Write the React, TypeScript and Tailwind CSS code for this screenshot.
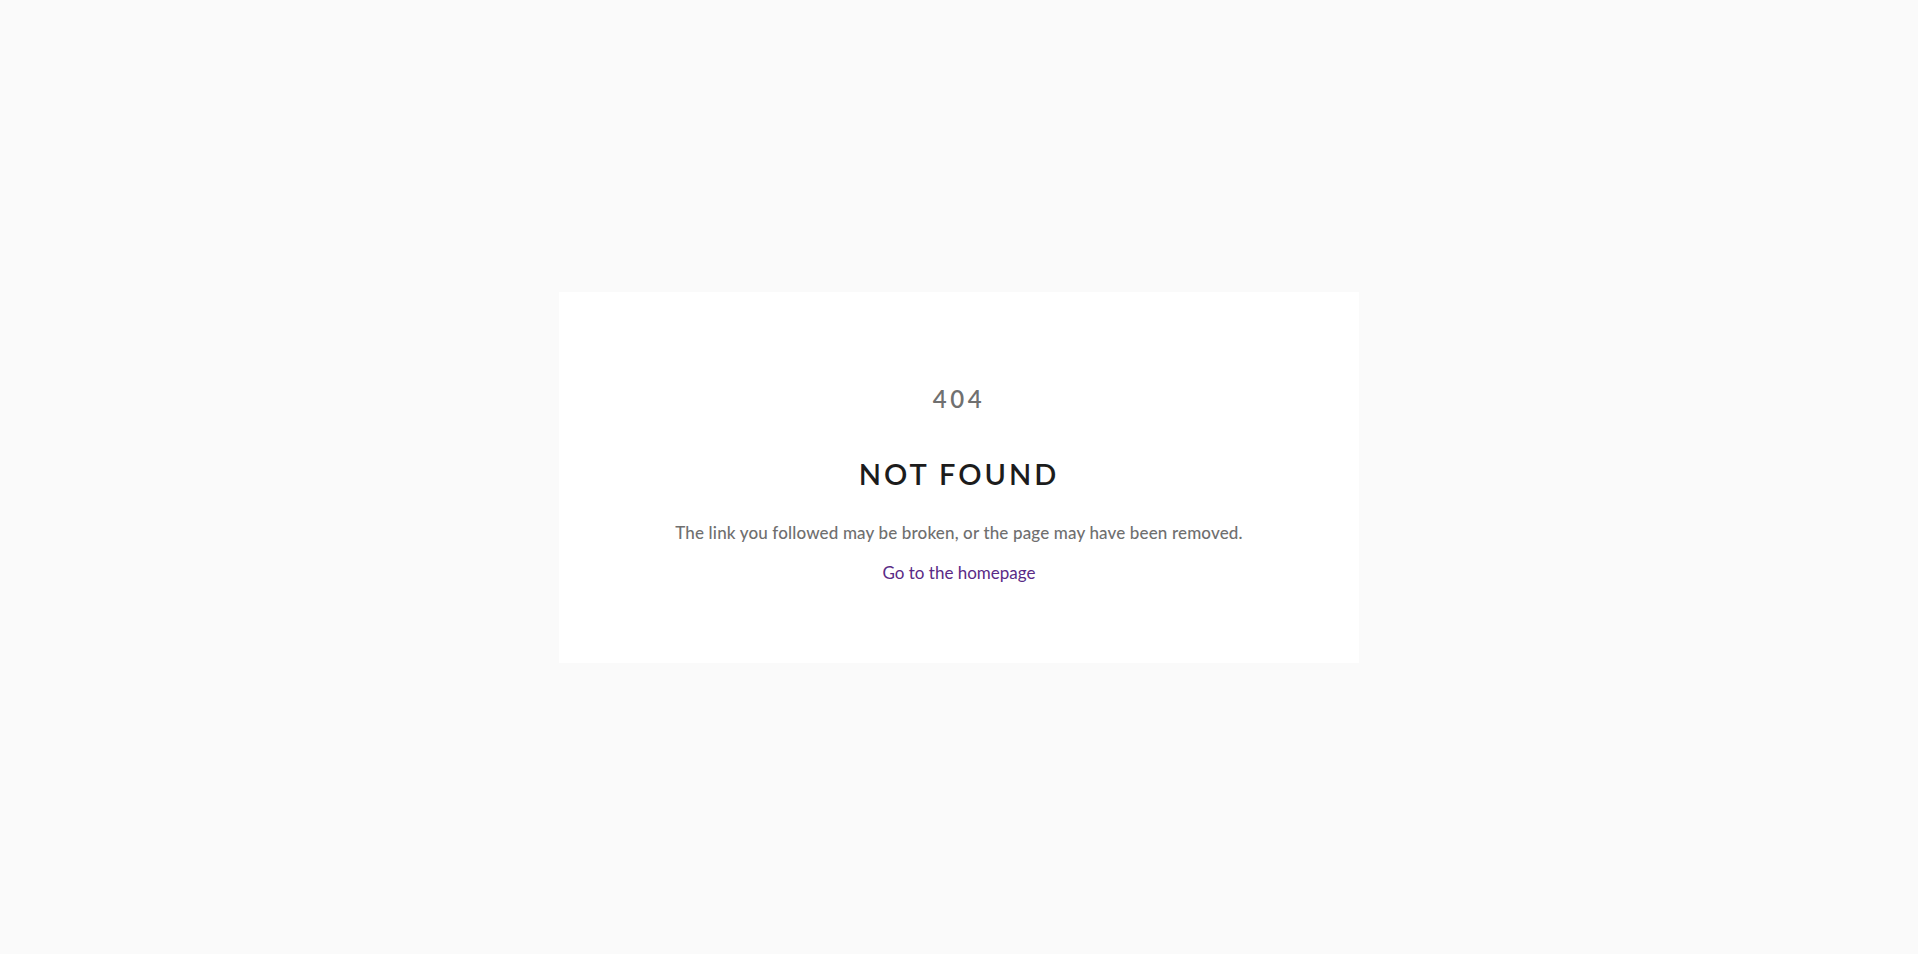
const NotFound = () => {
  return (
    <div className="flex h-screen w-full items-center justify-center bg-[#fafafa] font-['Lato','Open_Sans',sans-serif]">
      <div className="flex w-[800px] flex-col items-center bg-white pt-[92px] pb-[78px] text-center">
        <p className="text-[24px] leading-[30px] font-semibold tracking-[3.5px] text-[#707070]">404</p>
        <h1 className="mt-[42px] text-[29px] leading-[36px] font-semibold tracking-[3px] text-[#1c1c1c]">
          NOT FOUND
        </h1>
        <p className="mt-[29px] text-[17px] leading-[24px] font-medium tracking-[0.15px] text-[#6f6f6f]">
          The link you followed may be broken, or the page may have been removed.
        </p>
        <a href="#" className="mt-[16px] text-[17px] leading-[24px] text-[#5a2a86]">
          Go to the homepage
        </a>
      </div>
    </div>
  );
};

export default function App() {
  return <NotFound />;
}
